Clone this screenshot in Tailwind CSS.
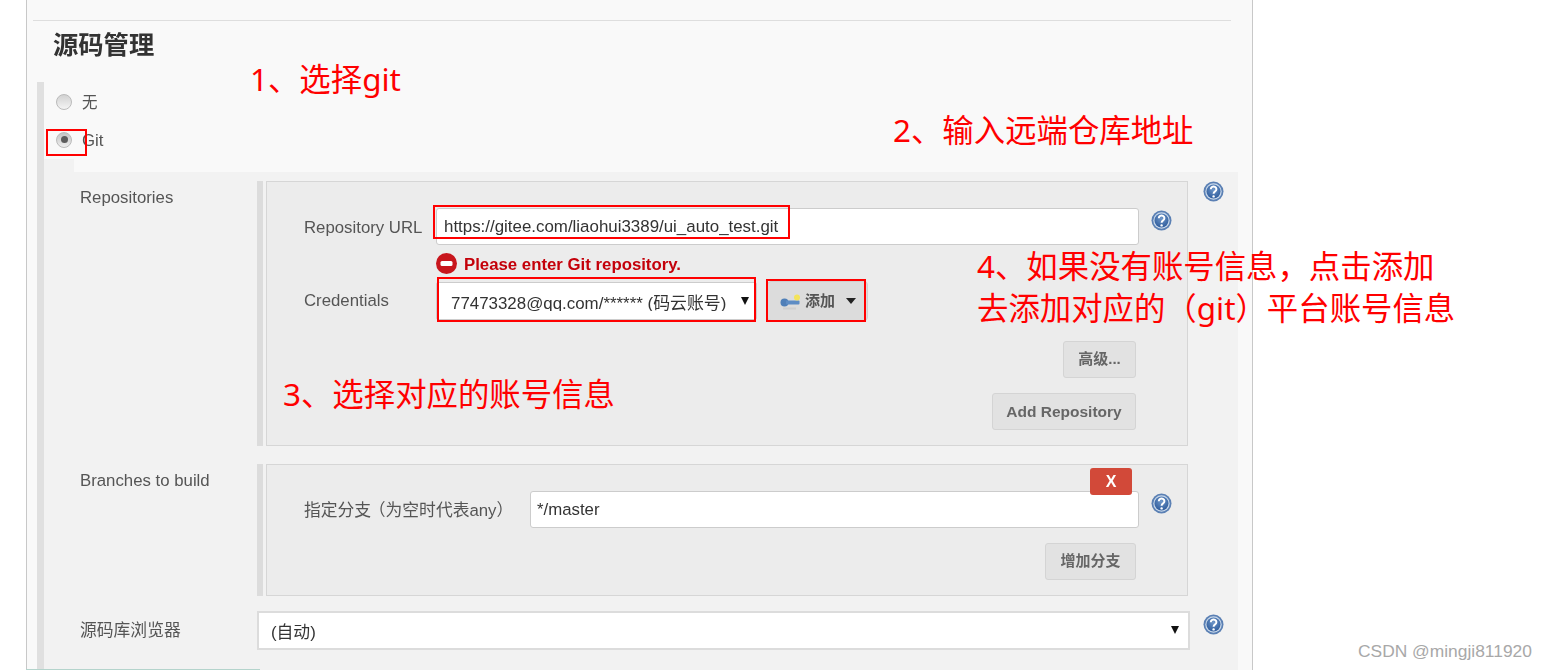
<!DOCTYPE html>
<html lang="zh-CN">
<head>
    <meta charset="utf-8">
    <title>源码管理</title>
    <script src="https://cdn.jsdelivr.net/npm/@tailwindcss/browser@4"></script>
</head>
<body class="bg-white font-['Liberation_Sans','Noto_Sans_CJK_SC',sans-serif] text-[16.8px] text-[#555]">
    <svg class="absolute size-0">
        <defs>
            <radialGradient id="helpfill" cx="50%" cy="35%" r="65%">
                <stop offset="0" stop-color="#6f97c9"/>
                <stop offset="1" stop-color="#2f5c9c"/>
            </radialGradient>
            <symbol id="help" viewBox="0 0 21 21">
                <circle cx="10.5" cy="10.5" r="10" fill="#5b80b4"/>
                <circle cx="10.5" cy="10.5" r="8.2" fill="#c9d8ea"/>
                <circle cx="10.5" cy="10.5" r="7" fill="url(#helpfill)"/>
                <path d="M7.8 8.2a2.8 2.6 0 1 1 4.3 2.2c-1 .7-1.5 1.1-1.5 2.3" fill="none" stroke="#fff" stroke-width="2"/>
                <circle cx="10.6" cy="15.4" r="1.2" fill="#fff"/>
            </symbol>
        </defs>
    </svg>

    <div class="relative h-[670px] w-[1549px] overflow-hidden">
        <div class="ml-[26px] h-[670px] w-[1227px] border-x border-[#c8c8c8] bg-[#f9f9f9] blur-[0.4px]">
            <div class="ml-[6px] w-[1198px] pt-[20px]"><div class="h-px bg-[#dedede]"></div></div>
            <h2 class="ml-[26px] mt-[8px] h-[53px] text-[25.300px] leading-[32px] font-bold text-[#333]">源码管理</h2>

            <div class="ml-[10px] border-l-[7px] border-[#e0e0e0]">
                <div class="h-[40px] pl-[12px] pt-[7px]">
                    <label class="flex items-center gap-[10px]">
                        <span class="size-[16px] rounded-full border border-[#bbb] bg-linear-to-b from-[#d2d2d2] to-[#f4f4f4]"></span>
                        <span class="mt-[2px] text-[15.500px]">无</span>
                    </label>
                </div>
                <div class="h-[37px] pl-[12px] pt-[4px]">
                    <label class="flex items-center gap-[10px]">
                        <span class="flex size-[16px] items-center justify-center rounded-full border border-[#bbb] bg-linear-to-b from-[#c4c4c4] to-[#eee]">
                            <span class="size-[7px] rounded-full bg-[#5c5c5c]"></span>
                        </span>
                        <span class="mt-[2px]">Git</span>
                    </label>
                </div>

                <div class="h-[13px] w-[30px] bg-[#f2f2f2]"></div>
                <div class="w-[1194px] bg-[#f2f2f2] pt-[9px] pb-[40px]">
                    <!-- Repositories -->
                    <div class="flex">
                        <div class="w-[213px] pl-[36px] pt-[4px]">Repositories</div>
                        <div class="w-[6px] bg-[#dcdcdc]"></div>
                        <div class="ml-[3px] h-[265px] w-[922px] border border-[#d6d6d6] bg-[#ececec] pl-[37px] pt-[26px]">
                            <div class="flex items-start">
                                <div class="w-[132px] pt-[7px]">Repository URL</div>
                                <div class="flex h-[37px] w-[703px] items-center rounded-[3px] border border-[#ccc] bg-white pl-[7px] text-[16.900px] text-[#333]">https://gitee.com/liaohui3389/ui_auto_test.git</div>
                                <svg class="ml-[12px] mt-[2px] size-[21px]"><use href="#help"/></svg>
                            </div>
                            <div class="ml-[132px] mt-[8px] flex h-[21px] items-center gap-[7px] text-[16.800px] font-bold text-[#c4000a]">
                                <svg class="size-[21px]" viewBox="0 0 21 21">
                                    <circle cx="10.5" cy="10.5" r="10.5" fill="#c8161d"/>
                                    <rect x="4.5" y="8" width="12" height="5" rx="1.5" fill="#fff"/>
                                </svg>
                                <span class="mt-[2px]">Please enter Git repository.</span>
                            </div>
                            <div class="mt-[7px] flex items-center">
                                <div class="w-[132px]">Credentials</div>
                                <div class="relative flex h-[38px] w-[321px] items-center rounded-[2px] border border-[#ccc] bg-white pl-[14px] text-[16.900px] text-[#333]">
                                    <div class="h-[20px] overflow-hidden pt-px leading-[24px]">77473328@qq.com/****** (码云账号)</div>
                                    <svg class="absolute right-[7px] top-[14px] size-[8px]" viewBox="0 0 9 9"><path d="M0 0h9L4.500 9z" fill="#111"/></svg>
                                </div>
                                <button class="ml-[10px] flex h-[40px] w-[101px] items-center rounded-[4px] border border-[#d0d0d0] bg-[#dcdcdc] pl-[12px] text-[15px] font-bold text-[#555]">
                                    <svg class="size-[21px] shrink-0" viewBox="0 0 21 21">
                                        <path d="M3 17.500h13" stroke="#cfcfcf" stroke-width="2"/>
                                        <circle cx="4.500" cy="11.500" r="4" fill="#4f7fb8"/>
                                        <rect x="6" y="9.500" width="13.500" height="4" rx="1" fill="#5d8cc4"/>
                                        <circle cx="17" cy="6.500" r="3" fill="#f3e35a"/>
                                    </svg>
                                    <span class="ml-[4px]">添加</span>
                                    <svg class="ml-[11px] h-[6px] w-[10px]" viewBox="0 0 10 6"><path d="M0 0h10L5 6z" fill="#222"/></svg>
                                </button>
                            </div>
                            <div class="ml-[759px] mt-[20px]">
                                <button class="h-[37px] w-[73px] rounded-[3px] border border-[#d4d4d4] bg-[#e2e2e2] text-[15px] font-bold text-[#666]">高级...</button>
                            </div>
                            <div class="ml-[688px] mt-[15px]">
                                <button class="h-[37px] w-[144px] rounded-[3px] border border-[#d4d4d4] bg-[#e2e2e2] text-[15.500px] font-bold text-[#666]">Add Repository</button>
                            </div>
                        </div>
                        <svg class="ml-[15px] size-[21px]"><use href="#help"/></svg>
                    </div>

                    <!-- Branches -->
                    <div class="mt-[18px] flex">
                        <div class="w-[213px] pl-[36px] pt-[4px]">Branches to build</div>
                        <div class="w-[6px] bg-[#dcdcdc]"></div>
                        <div class="relative ml-[3px] h-[132px] w-[922px] border border-[#d6d6d6] bg-[#ececec] pl-[37px] pt-[26px]">
                            <button class="absolute right-[55px] top-[3px] z-10 h-[27px] w-[42px] rounded-[3px] bg-[#d24939] text-[16px] font-bold text-white">X</button>
                            <div class="flex items-start">
                                <div class="w-[226px] pt-[7px] [font-feature-settings:'halt']">指定分支<span class="ml-[6px]">（</span>为空时代表any）</div>
                                <div class="flex h-[37px] w-[609px] items-center rounded-[3px] border border-[#ccc] bg-white pl-[6px] pt-[1px] text-[16.800px] text-[#333]">*/master</div>
                                <svg class="ml-[12px] mt-[2px] size-[21px]"><use href="#help"/></svg>
                            </div>
                            <div class="mt-[15px] ml-[741px]">
                                <button class="h-[37px] w-[91px] rounded-[3px] border border-[#d4d4d4] bg-[#e2e2e2] text-[15px] font-bold text-[#666]">增加分支</button>
                            </div>
                        </div>
                    </div>

                    <!-- 源码库浏览器 -->
                    <div class="mt-[15px] flex">
                        <div class="w-[213px] pl-[36px] pt-[7px]">源码库浏览器</div>
                        <div class="relative flex h-[39px] w-[933px] items-center border-2 border-[#dcdcdc] bg-white pl-[12px] pt-[4px] text-[16.800px] text-[#333]">
                            (自动)
                            <svg class="absolute right-[9px] top-[13px] size-[8px]" viewBox="0 0 9 9"><path d="M0 0h9L4.500 9z" fill="#111"/></svg>
                        </div>
                        <svg class="ml-[13px] mt-[3px] size-[21px]"><use href="#help"/></svg>
                    </div>
                </div>
            </div>
        </div>

        <div class="absolute bottom-0 left-[26px] h-px w-[234px] bg-[#b4d4cc]"></div>

        <!-- 红色标注 -->
        <div class="absolute left-[46px] top-[129px] h-[27px] w-[41px] border-2 border-[#f00]"></div>
        <div class="absolute left-[433px] top-[205px] h-[34px] w-[357px] border-2 border-[#f00]"></div>
        <div class="absolute left-[437px] top-[277px] h-[45px] w-[319px] border-2 border-[#f00]"></div>
        <div class="absolute left-[766px] top-[279px] h-[43px] w-[100px] border-2 border-[#f00]"></div>

        <div class="absolute left-[250px] top-[57px] font-['Noto_Sans','Noto_Sans_CJK_SC',sans-serif] text-[31.400px] leading-[44px] text-[#f00]">1、选择git</div>
        <div class="absolute left-[893px] top-[108px] font-['Noto_Sans','Noto_Sans_CJK_SC',sans-serif] text-[31.400px] leading-[44px] text-[#f00]">2、输入远端仓库地址</div>
        <div class="absolute left-[283px] top-[372px] font-['Noto_Sans','Noto_Sans_CJK_SC',sans-serif] text-[31.400px] leading-[44px] text-[#f00]">3、选择对应的账号信息</div>
        <div class="absolute left-[977px] top-[245px] font-['Noto_Sans','Noto_Sans_CJK_SC',sans-serif] text-[31.400px] leading-[42px] text-[#f00]">4、如果没有账号信息，点击添加<br>去添加对应的（git）平台账号信息</div>

        <div class="absolute left-[1358px] top-[641px] text-[17.400px] leading-[20px] text-[#a8a8a8]">CSDN @mingji811920</div>
    </div>
</body>
</html>
